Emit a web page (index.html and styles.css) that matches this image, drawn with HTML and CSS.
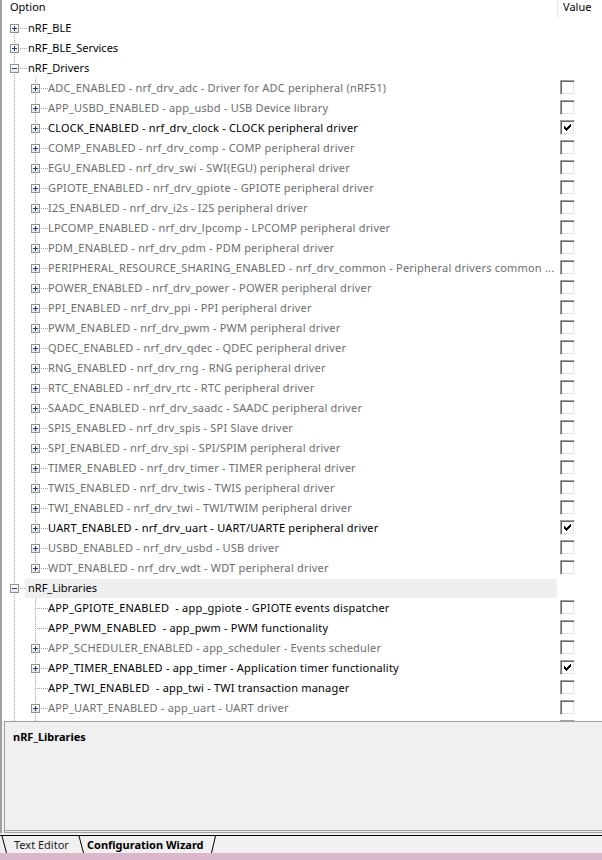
FILE: index.html
```html
<!DOCTYPE html>
<html>
<head>
<meta charset="utf-8">
<title>Configuration Wizard</title>
<link rel="stylesheet" href="styles.css">
</head>
<body>
<div class="app">
  <div class="tree">
    <div class="header"><div class="h-opt">Option</div><div class="h-val">Value</div></div>

    <div class="row"><i class="c f"><b class="exp"></b></i><span class="lbl">nRF_BLE</span><span class="val"></span></div>
    <div class="row"><i class="c t"><b class="exp"></b></i><span class="lbl">nRF_BLE_Services</span><span class="val"></span></div>
    <div class="row"><i class="c t"><b class="exp minus"></b></i><span class="lbl">nRF_Drivers</span><span class="val"></span></div>

    <div class="row"><i class="c v"></i><i class="c t"><b class="exp"></b></i><span class="lbl l2 dim">ADC_ENABLED - nrf_drv_adc - Driver for ADC peripheral (nRF51)</span><span class="val"><i class="chk"></i></span></div>
    <div class="row"><i class="c v"></i><i class="c t"><b class="exp"></b></i><span class="lbl l2 dim">APP_USBD_ENABLED - app_usbd - USB Device library</span><span class="val"><i class="chk"></i></span></div>
    <div class="row"><i class="c v"></i><i class="c t"><b class="exp"></b></i><span class="lbl l2">CLOCK_ENABLED - nrf_drv_clock - CLOCK peripheral driver</span><span class="val"><i class="chk"><svg width="7" height="7" viewBox="0 0 7 7"><path d="M6 0h1v1h-1zM5 1h2v1h-2zM0 2h1v1h-1zM4 2h3v1h-3zM0 3h2v1h-2zM3 3h3v1h-3zM0 4h5v1h-5zM1 5h3v1h-3zM2 6h1v1h-1z" fill="#000" shape-rendering="crispEdges"/></svg></i></span></div>
    <div class="row"><i class="c v"></i><i class="c t"><b class="exp"></b></i><span class="lbl l2 dim">COMP_ENABLED - nrf_drv_comp - COMP peripheral driver</span><span class="val"><i class="chk"></i></span></div>
    <div class="row"><i class="c v"></i><i class="c t"><b class="exp"></b></i><span class="lbl l2 dim">EGU_ENABLED - nrf_drv_swi - SWI(EGU) peripheral driver</span><span class="val"><i class="chk"></i></span></div>
    <div class="row"><i class="c v"></i><i class="c t"><b class="exp"></b></i><span class="lbl l2 dim">GPIOTE_ENABLED - nrf_drv_gpiote - GPIOTE peripheral driver</span><span class="val"><i class="chk"></i></span></div>
    <div class="row"><i class="c v"></i><i class="c t"><b class="exp"></b></i><span class="lbl l2 dim">I2S_ENABLED - nrf_drv_i2s - I2S peripheral driver</span><span class="val"><i class="chk"></i></span></div>
    <div class="row"><i class="c v"></i><i class="c t"><b class="exp"></b></i><span class="lbl l2 dim">LPCOMP_ENABLED - nrf_drv_lpcomp - LPCOMP peripheral driver</span><span class="val"><i class="chk"></i></span></div>
    <div class="row"><i class="c v"></i><i class="c t"><b class="exp"></b></i><span class="lbl l2 dim">PDM_ENABLED - nrf_drv_pdm - PDM peripheral driver</span><span class="val"><i class="chk"></i></span></div>
    <div class="row"><i class="c v"></i><i class="c t"><b class="exp"></b></i><span class="lbl l2 dim">PERIPHERAL_RESOURCE_SHARING_ENABLED - nrf_drv_common - Peripheral drivers common ...</span><span class="val"><i class="chk"></i></span></div>
    <div class="row"><i class="c v"></i><i class="c t"><b class="exp"></b></i><span class="lbl l2 dim">POWER_ENABLED - nrf_drv_power - POWER peripheral driver</span><span class="val"><i class="chk"></i></span></div>
    <div class="row"><i class="c v"></i><i class="c t"><b class="exp"></b></i><span class="lbl l2 dim">PPI_ENABLED - nrf_drv_ppi - PPI peripheral driver</span><span class="val"><i class="chk"></i></span></div>
    <div class="row"><i class="c v"></i><i class="c t"><b class="exp"></b></i><span class="lbl l2 dim">PWM_ENABLED - nrf_drv_pwm - PWM peripheral driver</span><span class="val"><i class="chk"></i></span></div>
    <div class="row"><i class="c v"></i><i class="c t"><b class="exp"></b></i><span class="lbl l2 dim">QDEC_ENABLED - nrf_drv_qdec - QDEC peripheral driver</span><span class="val"><i class="chk"></i></span></div>
    <div class="row"><i class="c v"></i><i class="c t"><b class="exp"></b></i><span class="lbl l2 dim">RNG_ENABLED - nrf_drv_rng - RNG peripheral driver</span><span class="val"><i class="chk"></i></span></div>
    <div class="row"><i class="c v"></i><i class="c t"><b class="exp"></b></i><span class="lbl l2 dim">RTC_ENABLED - nrf_drv_rtc - RTC peripheral driver</span><span class="val"><i class="chk"></i></span></div>
    <div class="row"><i class="c v"></i><i class="c t"><b class="exp"></b></i><span class="lbl l2 dim">SAADC_ENABLED - nrf_drv_saadc - SAADC peripheral driver</span><span class="val"><i class="chk"></i></span></div>
    <div class="row"><i class="c v"></i><i class="c t"><b class="exp"></b></i><span class="lbl l2 dim">SPIS_ENABLED - nrf_drv_spis - SPI Slave driver</span><span class="val"><i class="chk"></i></span></div>
    <div class="row"><i class="c v"></i><i class="c t"><b class="exp"></b></i><span class="lbl l2 dim">SPI_ENABLED - nrf_drv_spi - SPI/SPIM peripheral driver</span><span class="val"><i class="chk"></i></span></div>
    <div class="row"><i class="c v"></i><i class="c t"><b class="exp"></b></i><span class="lbl l2 dim">TIMER_ENABLED - nrf_drv_timer - TIMER peripheral driver</span><span class="val"><i class="chk"></i></span></div>
    <div class="row"><i class="c v"></i><i class="c t"><b class="exp"></b></i><span class="lbl l2 dim">TWIS_ENABLED - nrf_drv_twis - TWIS peripheral driver</span><span class="val"><i class="chk"></i></span></div>
    <div class="row"><i class="c v"></i><i class="c t"><b class="exp"></b></i><span class="lbl l2 dim">TWI_ENABLED - nrf_drv_twi - TWI/TWIM peripheral driver</span><span class="val"><i class="chk"></i></span></div>
    <div class="row"><i class="c v"></i><i class="c t"><b class="exp"></b></i><span class="lbl l2">UART_ENABLED - nrf_drv_uart - UART/UARTE peripheral driver</span><span class="val"><i class="chk"><svg width="7" height="7" viewBox="0 0 7 7"><path d="M6 0h1v1h-1zM5 1h2v1h-2zM0 2h1v1h-1zM4 2h3v1h-3zM0 3h2v1h-2zM3 3h3v1h-3zM0 4h5v1h-5zM1 5h3v1h-3zM2 6h1v1h-1z" fill="#000" shape-rendering="crispEdges"/></svg></i></span></div>
    <div class="row"><i class="c v"></i><i class="c t"><b class="exp"></b></i><span class="lbl l2 dim">USBD_ENABLED - nrf_drv_usbd - USB driver</span><span class="val"><i class="chk"></i></span></div>
    <div class="row"><i class="c v"></i><i class="c l"><b class="exp"></b></i><span class="lbl l2 dim">WDT_ENABLED - nrf_drv_wdt - WDT peripheral driver</span><span class="val"><i class="chk"></i></span></div>

    <div class="row"><i class="c t"><b class="exp minus"></b></i><span class="lbl hl">nRF_Libraries</span><span class="val"></span></div>

    <div class="row"><i class="c v"></i><i class="c t"></i><span class="lbl l2">APP_GPIOTE_ENABLED  - app_gpiote - GPIOTE events dispatcher</span><span class="val"><i class="chk"></i></span></div>
    <div class="row"><i class="c v"></i><i class="c t"></i><span class="lbl l2">APP_PWM_ENABLED  - app_pwm - PWM functionality</span><span class="val"><i class="chk"></i></span></div>
    <div class="row"><i class="c v"></i><i class="c t"><b class="exp"></b></i><span class="lbl l2 dim">APP_SCHEDULER_ENABLED - app_scheduler - Events scheduler</span><span class="val"><i class="chk"></i></span></div>
    <div class="row"><i class="c v"></i><i class="c t"><b class="exp"></b></i><span class="lbl l2">APP_TIMER_ENABLED - app_timer - Application timer functionality</span><span class="val"><i class="chk"><svg width="7" height="7" viewBox="0 0 7 7"><path d="M6 0h1v1h-1zM5 1h2v1h-2zM0 2h1v1h-1zM4 2h3v1h-3zM0 3h2v1h-2zM3 3h3v1h-3zM0 4h5v1h-5zM1 5h3v1h-3zM2 6h1v1h-1z" fill="#000" shape-rendering="crispEdges"/></svg></i></span></div>
    <div class="row"><i class="c v"></i><i class="c t"></i><span class="lbl l2">APP_TWI_ENABLED  - app_twi - TWI transaction manager</span><span class="val"><i class="chk"></i></span></div>
    <div class="row"><i class="c v"></i><i class="c t"><b class="exp"></b></i><span class="lbl l2 dim">APP_UART_ENABLED - app_uart - UART driver</span><span class="val"><i class="chk"></i></span></div>
    <div class="row"><i class="c v"></i><i class="c t"><b class="exp"></b></i><span class="lbl l2 dim"></span><span class="val"><i class="chk"></i></span></div>
  </div>

  <div class="desc-wrap"><div class="desc">nRF_Libraries</div></div>
  <div class="gap"></div>

  <div class="tabbar">
    <svg class="edge" width="8" height="17" viewBox="0 0 8 17"><path d="M2 0L6.5 17" stroke="#000" stroke-width="1" fill="none"/></svg>
    <span class="tab tab1">Text Editor</span>
    <svg class="edge" width="8" height="17" viewBox="0 0 8 17"><path d="M1 0L5.5 17" stroke="#000" stroke-width="1" fill="none"/></svg>
    <span class="tab tab2">Configuration Wizard</span>
    <svg class="edge" width="8" height="17" viewBox="0 0 8 17"><path d="M5.5 0L1.5 17" stroke="#000" stroke-width="1" fill="none"/></svg>
  </div>
  <div class="status"></div>
</div>
</body>
</html>
```

FILE: styles.css
```css
* { box-sizing: border-box; margin: 0; padding: 0; }
html, body { width: 602px; height: 860px; overflow: hidden; background: #fff; }
body {
  font-family: "Noto Sans", "Open Sans", sans-serif;
  font-size: 11px;
  color: #000;
}

.tree {
  height: 721px;
  border-left: 2px solid #a0a0a0;
  overflow: hidden;
  background: #fff;
}

.header { display: flex; height: 18px; line-height: 14px; }
.h-opt { flex: 1; padding-left: 8px; }
.h-val { width: 45px; flex: none; border-left: 1px solid #e3e3e3; padding-left: 5px; }

.row { display: flex; height: 20px; padding-left: 2px; line-height: 20px; }

.c {
  width: 21px;
  flex: none;
  display: flex;
  justify-content: center;
  align-items: flex-start;
  background-repeat: no-repeat;
}
.c.v {
  background-image: repeating-linear-gradient(#a0a0a0 0 1px, transparent 1px 2px);
  background-size: 1px 20px;
  background-position: 10px 0;
}
.c.t {
  background-image: repeating-linear-gradient(#a0a0a0 0 1px, transparent 1px 2px),
                    repeating-linear-gradient(90deg, #a0a0a0 0 1px, transparent 1px 2px);
  background-size: 1px 20px, 11px 1px;
  background-position: 10px 0, 10px 10px;
}
.c.l {
  background-image: repeating-linear-gradient(#a0a0a0 0 1px, transparent 1px 2px),
                    repeating-linear-gradient(90deg, #a0a0a0 0 1px, transparent 1px 2px);
  background-size: 1px 10px, 11px 1px;
  background-position: 10px 0, 10px 10px;
}
.c.f {
  background-image: repeating-linear-gradient(#a0a0a0 0 1px, transparent 1px 2px),
                    repeating-linear-gradient(90deg, #a0a0a0 0 1px, transparent 1px 2px);
  background-size: 1px 10px, 11px 1px;
  background-position: 10px 10px, 10px 10px;
}

.exp {
  display: block;
  width: 9px;
  height: 9px;
  margin-top: 6px;
  border: 1px solid #919191;
  background:
    linear-gradient(#233a6a, #233a6a) 1px 3px / 5px 1px no-repeat,
    linear-gradient(#233a6a, #233a6a) 3px 1px / 1px 5px no-repeat,
    linear-gradient(#ffffff, #e4e4e4);
}
.exp.minus {
  background:
    linear-gradient(#233a6a, #233a6a) 1px 3px / 5px 1px no-repeat,
    linear-gradient(#ffffff, #e4e4e4);
}

.lbl {
  flex: 1;
  min-width: 0;
  white-space: pre;
  overflow: hidden;
  padding-left: 3px;
  background: repeating-linear-gradient(90deg, #a0a0a0 0 1px, transparent 1px 2px) 1px 10px / 2px 1px no-repeat;
}
.lbl.l2 { padding-left: 2px; letter-spacing: 0.2px; }
.lbl.dim { color: #6d6d6d; }
.lbl.hl { background: linear-gradient(#efefef, #efefef) 0 1px / 100% 19px no-repeat; }

.val { width: 45px; flex: none; padding-left: 3px; }

.chk {
  display: block;
  width: 15px;
  height: 15px;
  margin-top: 2px;
  border-top: 1px solid #a0a0a0;
  border-left: 1px solid #a0a0a0;
  border-right: 1px solid #fff;
  border-bottom: 1px solid #fff;
  box-shadow: inset 1px 1px 0 #696969, inset -1px -1px 0 #e3e3e3;
  background: #fff;
}
.chk svg { display: block; margin: 3px 0 0 3px; }

.desc-wrap {
  border-left: 2px solid #a0a0a0;
  background: #f0f0f0;
}
.desc {
  margin-left: 2px;
  height: 112px;
  border-left: 1px solid #a0a0a0;
  border-top: 1px solid #a0a0a0;
  border-bottom: 3px double #a0a0a0;
  padding: 8px 0 0 8px;
  font-weight: bold;
  line-height: 14px;
}

.gap { height: 2px; background: #f0f0f0; }

.tabbar {
  display: flex;
  height: 18px;
  border-top: 1px solid #000;
  background: #f0f0f0;
  line-height: 17px;
}
.edge { display: block; flex: none; }
.tab { flex: none; white-space: nowrap; }
.tab1 { width: 70px; padding-left: 6px; color: #1a1a1a; }
.tab2 { width: 124px; padding-left: 1px; font-weight: bold; }

.status { height: 7px; background: #dab7ca; }
```
